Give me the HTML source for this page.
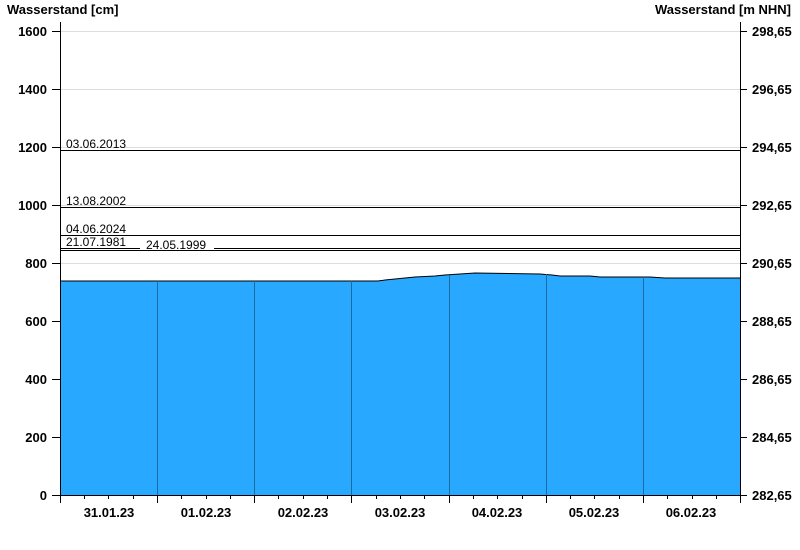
<!DOCTYPE html><html><head><style>body{margin:0;background:#fff}svg{display:block}</style></head><body>
<svg width="800" height="550" xmlns="http://www.w3.org/2000/svg" font-family="Liberation Sans, Arial, sans-serif">
<rect width="800" height="550" fill="#fff"/>
<g stroke="#dedede" stroke-width="1">
<line x1="60" y1="31.5" x2="740" y2="31.5"/><line x1="60" y1="89.5" x2="740" y2="89.5"/><line x1="60" y1="147.5" x2="740" y2="147.5"/><line x1="60" y1="205.5" x2="740" y2="205.5"/><line x1="60" y1="263.5" x2="740" y2="263.5"/><line x1="60" y1="321.5" x2="740" y2="321.5"/><line x1="60" y1="379.5" x2="740" y2="379.5"/><line x1="60" y1="437.5" x2="740" y2="437.5"/>
</g>
<polygon fill="#29a8ff" points="60,495 60,281 340,281 378,281 385,280 395,279 405,278 415,277 435,276 445,275 475,273 540,274 552,275 560,276 590,276 600,277 650,277 665,278 740,278 740,495"/>
<polyline fill="none" stroke="#000" stroke-width="1" points="60,281 340,281 378,281 385,280 395,279 405,278 415,277 435,276 445,275 475,273 540,274 552,275 560,276 590,276 600,277 650,277 665,278 740,278"/>
<g stroke="#1d6a9e" stroke-width="1">
<line x1="157.5" y1="281" x2="157.5" y2="495"/><line x1="254.5" y1="281" x2="254.5" y2="495"/><line x1="351.5" y1="281" x2="351.5" y2="495"/><line x1="449.5" y1="275" x2="449.5" y2="495"/><line x1="546.5" y1="274" x2="546.5" y2="495"/><line x1="643.5" y1="277" x2="643.5" y2="495"/>
</g>
<g stroke="#000" stroke-width="1">
<line x1="60" y1="150.5" x2="740" y2="150.5"/>
<line x1="60" y1="207.5" x2="740" y2="207.5"/>
<line x1="60" y1="235.5" x2="740" y2="235.5"/>
<line x1="60" y1="248.5" x2="140" y2="248.5"/><line x1="214" y1="248.5" x2="740" y2="248.5"/>
<line x1="60" y1="250.5" x2="740" y2="250.5"/>
<line x1="60.5" y1="22" x2="60.5" y2="495"/>
<line x1="740.5" y1="22" x2="740.5" y2="495"/>
<line x1="60" y1="495.5" x2="741" y2="495.5"/>
</g>
<g stroke="#000" stroke-width="1">
<path d="M52 31.5H60M52 89.5H60M52 147.5H60M52 205.5H60M52 263.5H60M52 321.5H60M52 379.5H60M52 437.5H60M52 495.5H60"/>
<path d="M740 31.5H747M740 89.5H747M740 147.5H747M740 205.5H747M740 263.5H747M740 321.5H747M740 379.5H747M740 437.5H747M740 495.5H747"/>
<path d="M60.5 495V503M157.5 495V503M254.5 495V503M351.5 495V503M449.5 495V503M546.5 495V503M643.5 495V503M740.5 495V503"/>
<path d="M84.5 495V499M108.5 495V499M133.5 495V499M181.5 495V499M206.5 495V499M230.5 495V499M278.5 495V499M303.5 495V499M327.5 495V499M376.5 495V499M400.5 495V499M424.5 495V499M473.5 495V499M497.5 495V499M522.5 495V499M570.5 495V499M594.5 495V499M619.5 495V499M667.5 495V499M692.5 495V499M716.5 495V499"/>
</g>
<g font-size="12" fill="#000">
<text x="66" y="148">03.06.2013</text>
<text x="66" y="205">13.08.2002</text>
<text x="66" y="233">04.06.2024</text>
<text x="66" y="246">21.07.1981</text>
<text x="146" y="249">24.05.1999</text>
</g>
<g font-size="13" font-weight="bold" fill="#000">
<text x="7" y="14">Wasserstand [cm]</text>
<text x="791" y="14" text-anchor="end">Wasserstand [m NHN]</text>
</g>
<g font-size="13" font-weight="bold" fill="#000" text-anchor="end">
<text x="47" y="36">1600</text><text x="47" y="94">1400</text><text x="47" y="152">1200</text><text x="47" y="210">1000</text><text x="47" y="268">800</text><text x="47" y="326">600</text><text x="47" y="384">400</text><text x="47" y="442">200</text><text x="47" y="500">0</text>
</g>
<g font-size="13" font-weight="bold" fill="#000">
<text x="752" y="36">298,65</text><text x="752" y="94">296,65</text><text x="752" y="152">294,65</text><text x="752" y="210">292,65</text><text x="752" y="268">290,65</text><text x="752" y="326">288,65</text><text x="752" y="384">286,65</text><text x="752" y="442">284,65</text><text x="752" y="500">282,65</text>
</g>
<g font-size="13" font-weight="bold" fill="#000" text-anchor="middle">
<text x="109" y="517">31.01.23</text><text x="206" y="517">01.02.23</text><text x="303" y="517">02.02.23</text><text x="400" y="517">03.02.23</text><text x="497" y="517">04.02.23</text><text x="594" y="517">05.02.23</text><text x="691" y="517">06.02.23</text>
</g>
</svg>
</body></html>
